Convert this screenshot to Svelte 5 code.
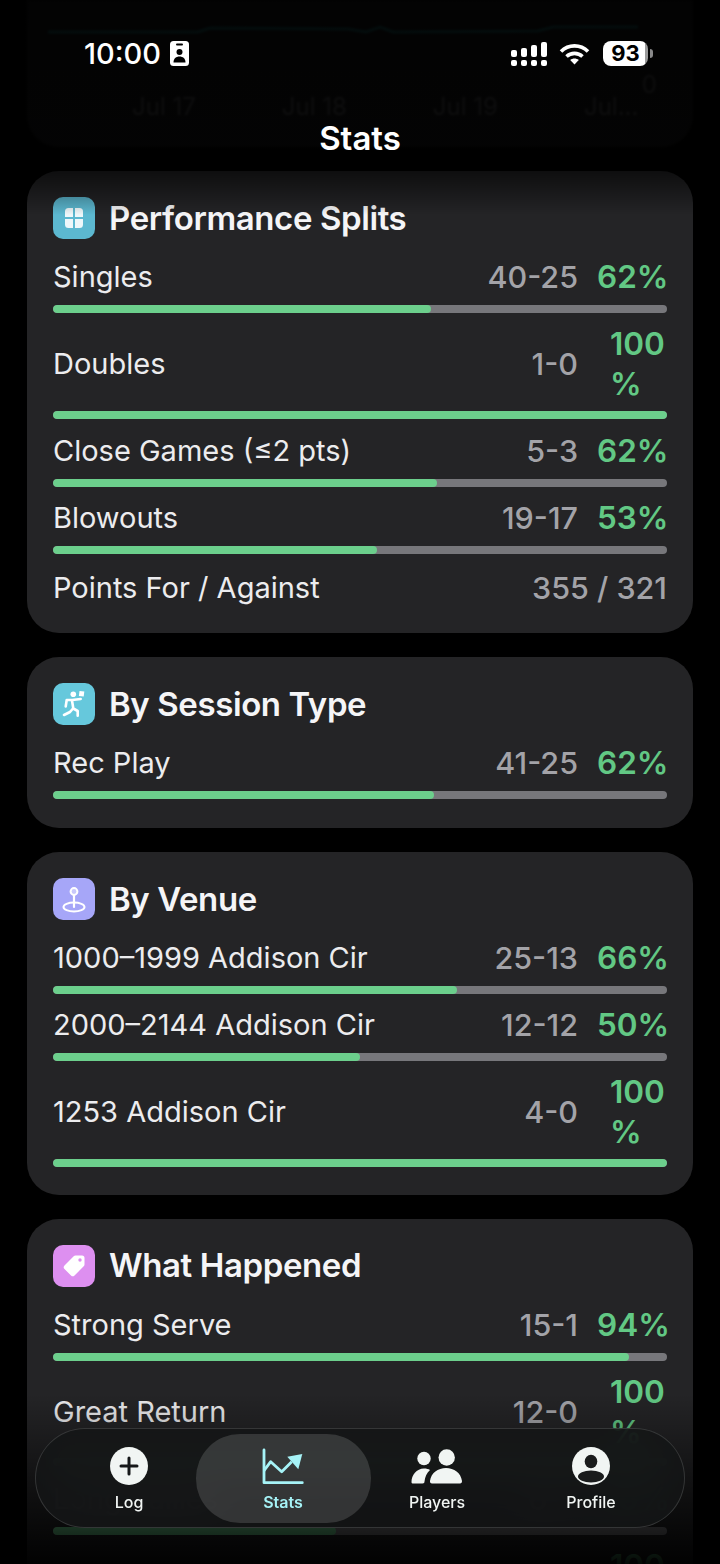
<script>
  // stats screen, scrolled a bit so the first card sits under the status bar
  const sections = [
    {
      title: 'Performance Splits',
      icon: 'grid',
      tint: 'cyan',
      rows: [
        { label: 'Singles', w: 40, l: 25, pct: 62 },
        { label: 'Doubles', w: 1, l: 0, pct: 100 },
        { label: 'Close Games (≤2 pts)', w: 5, l: 3, pct: 62 },
        { label: 'Blowouts', w: 19, l: 17, pct: 53 }
      ],
      footer: { label: 'Points For / Against', value: '355 / 321' }
    },
    {
      title: 'By Session Type',
      icon: 'runner',
      tint: 'sky',
      rows: [{ label: 'Rec Play', w: 41, l: 25, pct: 62 }]
    },
    {
      title: 'By Venue',
      icon: 'pin',
      tint: 'violet',
      rows: [
        { label: '1000–1999 Addison Cir', w: 25, l: 13, pct: 66 },
        { label: '2000–2144 Addison Cir', w: 12, l: 12, pct: 50 },
        { label: '1253 Addison Cir', w: 4, l: 0, pct: 100 }
      ]
    },
    {
      title: 'What Happened',
      icon: 'tag',
      tint: 'pink',
      rows: [
        { label: 'Strong Serve', w: 15, l: 1, pct: 94 },
        { label: 'Great Return', w: 12, l: 0, pct: 100 },
        { label: 'Long Rallies', w: 6, l: 7, pct: 46 },
        { label: 'Net Play', w: 3, l: 0, pct: 100 }
      ]
    }
  ];

  const tabs = ['Log', 'Stats', 'Players', 'Profile'];

  function share(row) {
    return (row.w / (row.w + row.l)) * 100;
  }
</script>

<div class="screen">
  <div class="scroll">
    <div class="chart-card">
      <svg class="chart-line" viewBox="0 0 590 12" width="590" height="12" aria-hidden="true">
        <polyline points="0,8 150,8 162,4 300,5 318,8 332,3 345,8 490,7 505,3 590,3" fill="none" stroke="#2fa7a7" stroke-width="3" />
      </svg>
      <div class="chart-dates">
        <span>Jul 17</span>
        <span>Jul 18</span>
        <span>Jul 19</span>
        <span>Jul...</span>
      </div>
      <span class="chart-zero">0</span>
    </div>

    {#each sections as section}
      <section class="card">
        <header class="card-head">
          <span class="badge {section.tint}">
            {#if section.icon === 'grid'}
              <svg width="24" height="24" viewBox="0 0 24 24" fill="#eef7fa" aria-hidden="true">
                <path d="M3 5.5A3.5 3.5 0 0 1 6.500 2H11v9H3z" />
                <path d="M13 2h4.500A3.500 3.500 0 0 1 21 5.500V11h-8z" />
                <path d="M3 13h8v9H6.500A3.500 3.500 0 0 1 3 18.500z" />
                <path d="M13 13h8v5.500a3.500 3.500 0 0 1-3.500 3.500H13z" />
              </svg>
            {:else if section.icon === 'runner'}
              <svg width="28" height="28" viewBox="0 0 28 28" aria-hidden="true">
                <circle cx="13.300" cy="4.300" r="2.800" fill="#fff" />
                <path d="M19.500 1l4.800.6-.6 5-4.800-.7z" fill="#fff" />
                <path d="M5.700 16.500l1-6.500h5.500l8.500-1M12 10.500l1.300 8 4.400 2.500v4.700M13 18.500l-3 3.500-6 3" fill="none" stroke="#fff" stroke-width="2.600" stroke-linecap="round" stroke-linejoin="round" />
              </svg>
            {:else if section.icon === 'pin'}
              <svg width="30" height="30" viewBox="0 0 30 30" aria-hidden="true">
                <ellipse cx="15" cy="23" rx="10.500" ry="4.500" fill="none" stroke="#fff" stroke-width="2" />
                <path d="M15 10v13" stroke="#fff" stroke-width="2.200" stroke-linecap="round" />
                <circle cx="15" cy="7.500" r="3.400" fill="#c9c9fb" stroke="#fff" stroke-width="2" />
              </svg>
            {:else}
              <svg width="30" height="30" viewBox="0 0 30 30" aria-hidden="true">
                <path d="M16.500 4.500h6.500a2.500 2.500 0 0 1 2.500 2.500v6.500a2.500 2.500 0 0 1-.8 1.800L15.500 24.500a2.500 2.500 0 0 1-3.500 0l-6.500-6.500a2.500 2.500 0 0 1 0-3.500L14.700 5.300a2.500 2.500 0 0 1 1.800-.8z" fill="#fff" />
                <circle cx="21" cy="9" r="1.700" fill="#dd8ff0" />
              </svg>
            {/if}
          </span>
          <h2>{section.title}</h2>
        </header>

        {#each section.rows as row}
          <div class="row" class:tall={row.pct === 100}>
            <div class="row-text">
              <span class="label">{row.label}</span>
              <span class="record">{row.w}-{row.l}</span>
              {#if row.pct === 100}
                <span class="pct wrap">100<br />%</span>
              {:else}
                <span class="pct">{row.pct}%</span>
              {/if}
            </div>
            <div class="track"><div class="fill" style="width: {share(row)}%"></div></div>
          </div>
        {/each}

        {#if section.footer}
          <div class="footer-row">
            <span class="label">{section.footer.label}</span>
            <span class="record">{section.footer.value}</span>
          </div>
        {/if}
      </section>
    {/each}
  </div>

  <div class="fade-top"></div>
  <div class="fade-bottom"></div>

  <div class="status">
    <div class="status-left">
      <span class="time">10:00</span>
      <svg width="19" height="25" viewBox="0 0 19 25" aria-hidden="true">
        <rect width="19" height="25" rx="3.500" fill="#fff" />
        <rect x="6" y="2.500" width="7" height="2" rx="1" fill="#000" />
        <circle cx="9.500" cy="11" r="3" fill="#000" />
        <path d="M3.500 21.500c0-4 2.500-6 6-6s6 2 6 6z" fill="#000" />
      </svg>
    </div>
    <div class="status-right">
      <svg width="36" height="24" viewBox="0 0 36 24" fill="#fff" aria-hidden="true">
        <rect x="0" y="8" width="6" height="7" rx="2" />
        <rect x="10" y="6" width="6" height="9" rx="2" />
        <rect x="20" y="3" width="6" height="12" rx="2" />
        <rect x="30" y="0" width="6" height="15" rx="2" />
        <rect x="0" y="18" width="6" height="6" rx="2" />
        <rect x="10" y="18" width="6" height="6" rx="2" />
        <rect x="20" y="18" width="6" height="6" rx="2" />
        <rect x="30" y="18" width="6" height="6" rx="2" />
      </svg>
      <svg class="wifi" width="31" height="22" viewBox="0 0 31 22" fill="none" stroke="#fff" stroke-width="3.600" aria-hidden="true">
        <path d="M2 8.500C9.500 1 21.500 1 29 8.500" />
        <path d="M7.500 13.500c4.500-4.200 11.500-4.200 16 0" />
        <path d="M15.500 21.500l-4.300-4.400c2.400-2 6.200-2 8.600 0z" fill="#fff" stroke="none" />
      </svg>
      <div class="battery">
        <span class="battery-body">93</span>
        <span class="battery-nub"></span>
      </div>
    </div>
  </div>
  <div class="page-title">Stats</div>

  <nav class="tabbar">
    {#each tabs as tab}
      <div class="tab" class:active={tab === 'Stats'}>
        {#if tab === 'Log'}
          <svg width="38" height="38" viewBox="0 0 38 38" aria-hidden="true">
            <circle cx="19" cy="19" r="19" fill="#f1f5f3" />
            <path d="M19 11v16M11 19h16" stroke="#16181a" stroke-width="3" stroke-linecap="round" />
          </svg>
        {:else if tab === 'Stats'}
          <svg width="42" height="38" viewBox="0 0 42 38" fill="none" aria-hidden="true">
            <path d="M2 3v32.700h38.300" stroke="#a6f3f7" stroke-width="2.800" stroke-linecap="round" stroke-linejoin="round" />
            <path d="M2 23.700l6.700-9 11 10 10-10" stroke="#a6f3f7" stroke-width="2.800" stroke-linejoin="round" />
            <path d="M25.300 9.700l15-2.700-4 15.300z" fill="#a6f3f7" />
          </svg>
        {:else if tab === 'Players'}
          <svg width="52" height="38" viewBox="0 0 52 38" fill="#f1f5f3" aria-hidden="true">
            <circle cx="13" cy="11.500" r="6.700" />
            <circle cx="35.700" cy="10.500" r="8.200" />
            <path d="M.5 35c0-7 5-13.500 12.500-13.500 2.500 0 4.500.5 6 1.500-3.500 3-5 7-5.500 11.500 0 1-.5 2-2 2H2.500c-1.500 0-2-.5-2-1.500z" />
            <path d="M19 34c1-8 8-13 16-13s15 5 16 13c0 1.500-.5 2.500-2 2.500H21c-1.500 0-2.200-1-2-2.500z" />
          </svg>
        {:else}
          <svg width="38" height="38" viewBox="0 0 38 38" aria-hidden="true">
            <circle cx="19" cy="19" r="19" fill="#f1f5f3" />
            <ellipse cx="19" cy="14.500" rx="6.300" ry="6.800" fill="#1a1c1c" />
            <ellipse cx="19" cy="29.500" rx="13" ry="6" fill="#1a1c1c" />
          </svg>
        {/if}
        <span class="tab-label">{tab}</span>
      </div>
    {/each}
  </nav>
</div>

<style>
  :global(body) {
    background: #000;
  }

  .screen {
    position: relative;
    height: 1564px;
    overflow: hidden;
    background: #000;
    font-family: Inter, "Liberation Sans", sans-serif;
    color: #f2f2f4;
  }

  .scroll {
    display: flex;
    flex-direction: column;
    gap: 24px;
    padding: 0 27px;
  }

  .chart-card {
    position: relative;
    height: 147px;
    border-radius: 0 0 32px 32px;
    background: #242426;
    overflow: hidden;
    filter: blur(1px);
  }

  .chart-line {
    position: absolute;
    left: 21px;
    top: 24px;
  }

  .chart-dates {
    position: absolute;
    left: 105px;
    top: 92px;
    display: flex;
    gap: 86px;
    font-size: 24px;
    color: #8e8e93;
  }

  .chart-zero {
    position: absolute;
    right: 36px;
    top: 70px;
    font-size: 24px;
    color: #8e8e93;
  }

  .card {
    display: flex;
    flex-direction: column;
    padding: 26px 26px 25px;
    border-radius: 32px;
    background: #242426;
  }

  .card-head {
    display: flex;
    align-items: center;
    gap: 14px;
    margin-bottom: 18px;
  }

  .card-head h2 {
    margin: 0;
    font-size: 33px;
    line-height: 41px;
    font-weight: 600;
    letter-spacing: -0.4px;
    color: #f5f5f7;
  }

  .badge {
    display: flex;
    align-items: center;
    justify-content: center;
    width: 42px;
    height: 42px;
    border-radius: 10px;
  }

  .badge.cyan { background: #5cb8d0; }
  .badge.sky { background: #66c8dc; }
  .badge.violet { background: #a6a6f8; }
  .badge.pink { background: #dd8ff0; }

  .row {
    display: flex;
    flex-direction: column;
    gap: 8px;
    padding-bottom: 11px;
  }

  .row.tall {
    gap: 6.5px;
    padding-bottom: 12.5px;
  }

  .row:last-child {
    padding-bottom: 4px;
  }

  .row.tall:last-child {
    padding-bottom: 3px;
  }

  .row-text {
    display: flex;
    align-items: center;
    font-size: 29px;
    line-height: 40px;
  }

  .label {
    flex: 1;
    min-width: 0;
    color: #ececee;
  }

  .record {
    color: #a3a3a8;
    font-size: 30.5px;
    font-weight: 500;
  }

  .pct {
    width: 70px;
    margin-left: 19px;
    box-sizing: border-box;
    flex: none;
    text-align: right;
    font-size: 31.5px;
    font-weight: 600;
    color: #62c884;
    white-space: nowrap;
  }

  .pct.wrap {
    padding-left: 13px;
    text-align: left;
  }

  .track {
    height: 8px;
    border-radius: 4px;
    background: #77777b;
    overflow: hidden;
  }

  .fill {
    height: 100%;
    border-radius: 4px;
    background: #6ccf8c;
  }

  .footer-row {
    display: flex;
    align-items: center;
    margin-top: 3px;
    font-size: 29px;
    line-height: 40px;
  }

  .fade-top {
    position: absolute;
    inset: 0 0 auto 0;
    height: 215px;
    background: linear-gradient(to bottom, rgba(0, 0, 0, 0.93) 0, rgba(0, 0, 0, 0.9) 150px, rgba(0, 0, 0, 0) 215px);
    pointer-events: none;
  }

  .fade-bottom {
    position: absolute;
    inset: auto 0 0 0;
    height: 170px;
    background: linear-gradient(to bottom, rgba(0, 0, 0, 0), rgba(0, 0, 0, 0.5) 50%, rgba(0, 0, 0, 0.95));
    pointer-events: none;
  }

  .status {
    position: absolute;
    left: 84px;
    right: 67px;
    top: 41px;
    display: flex;
    justify-content: space-between;
    align-items: center;
  }

  .status-left {
    display: flex;
    align-items: center;
    gap: 9px;
  }

  .time {
    font-size: 29px;
    line-height: 25px;
    font-weight: 500;
    color: #fff;
  }

  .status-right {
    display: flex;
    align-items: center;
    gap: 12px;
  }

  .wifi {
    margin-right: 1px;
  }

  .battery {
    display: flex;
    align-items: center;
    gap: 2px;
  }

  .battery-body {
    width: 45px;
    height: 25px;
    border-radius: 8px;
    background: linear-gradient(to right, #fff 93%, #9a9a9a 93%);
    color: #000;
    font-size: 22px;
    line-height: 25px;
    font-weight: 700;
    text-align: center;
  }

  .battery-nub {
    width: 3px;
    height: 9px;
    border-radius: 0 3px 3px 0;
    background: #8a8a8a;
  }

  .page-title {
    position: absolute;
    left: 0;
    right: 0;
    top: 118px;
    text-align: center;
    font-size: 33px;
    line-height: 40px;
    font-weight: 600;
    color: #fff;
  }

  .tabbar {
    position: absolute;
    left: 35px;
    right: 35px;
    top: 1428px;
    height: 100px;
    box-sizing: border-box;
    padding: 0 16px;
    display: flex;
    border-radius: 50px;
    border: 1.5px solid rgba(255, 255, 255, 0.14);
    background: rgba(20, 21, 22, 0.86);
    backdrop-filter: blur(16px);
  }

  .tab {
    position: relative;
    flex: 0 0 154px;
    display: flex;
    flex-direction: column;
    align-items: center;
    padding-top: 18px;
    height: 100%;
    box-sizing: border-box;
  }

  .tab > svg {
    position: relative;
    height: 38px;
  }

  .tab.active::before {
    content: "";
    position: absolute;
    left: -10px;
    right: -11px;
    top: 5px;
    bottom: 4px;
    border-radius: 44px;
    background: rgba(255, 255, 255, 0.14);
  }

  .tab-label {
    position: relative;
    margin-top: 7px;
    font-size: 16px;
    line-height: 20px;
    font-weight: 500;
    color: #f1f5f3;
  }

  .tab.active .tab-label {
    color: #a6f3f7;
    font-weight: 600;
  }
</style>
